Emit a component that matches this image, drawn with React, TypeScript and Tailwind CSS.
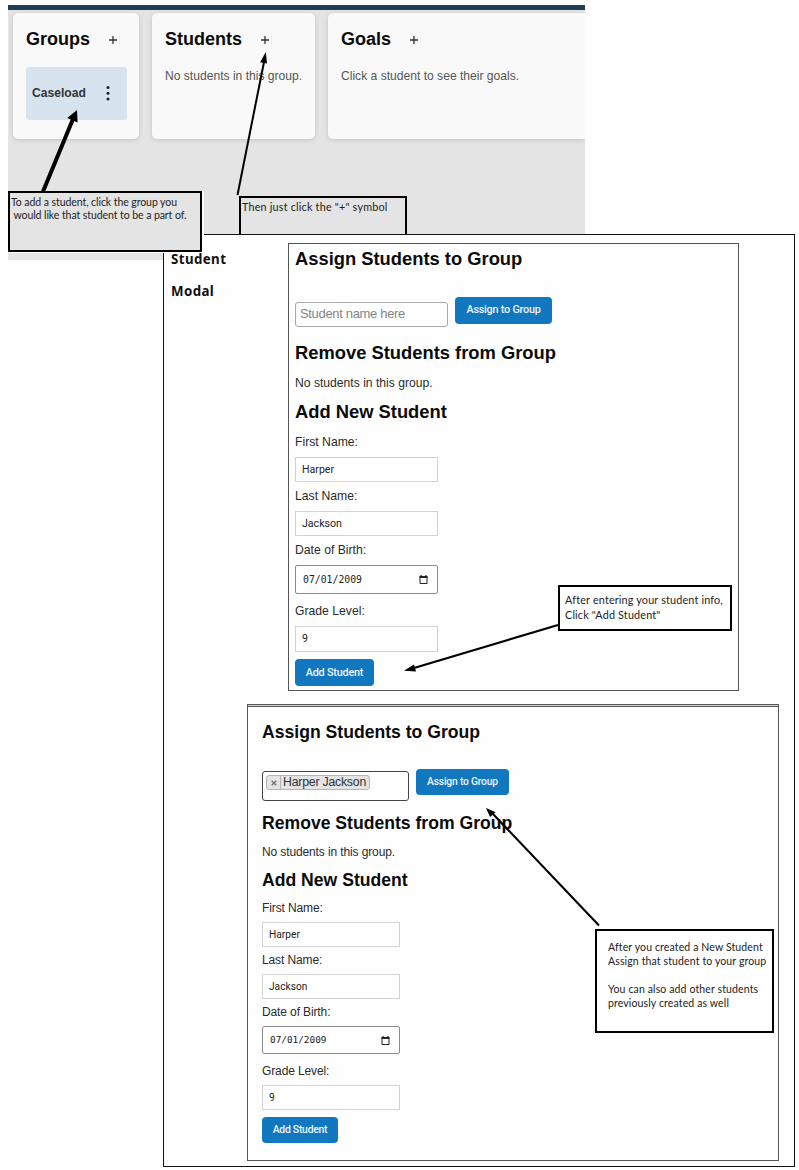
import React from "react";

const sizes = {
  large: {
    heading: "text-[18.35px] font-bold text-[#0b0b0b] whitespace-nowrap leading-[22px]",
    first: "pt-[4px] h-[29px]",
    row: "mt-[24px] flex h-[30px] items-start gap-[7px]",
    remove: "mt-[15px]",
    note: "mt-[10px] text-[12.15px] leading-[18px] text-[#2b2b2b]",
    add: "mt-[9px]",
    assign: "h-[27px] w-[97px] text-[10.8px] tracking-[-0.22px]",
    submit: "mt-[7px] h-[27px] w-[79px] pt-[1px] text-[10.8px] tracking-[-0.2px]",
    label: "text-[12.2px] leading-[18px] text-[#2b2b2b]",
    firstLabel: "mt-[10px]",
    nextLabel: "mt-[5px]",
    gradeLabel: "mt-[8px]",
    input: "mt-[6px] h-[25px] w-[143px] text-[10.6px] pl-[6px]",
    date: "mt-[6px] h-[29px] w-[143px] pl-[7px] pr-[9px] pt-[1px] text-[9.8px]",
    grade: "mt-[6px] h-[26px] w-[143px] text-[10.6px] pl-[6px]",
  },
  small: {
    heading: "text-[17.6px] font-bold text-[#0b0b0b] whitespace-nowrap leading-[22px]",
    first: "pt-[14px] h-[36px]",
    row: "mt-[26px] flex h-[32px] items-start gap-[7px]",
    remove: "mt-[11px]",
    note: "mt-[9px] text-[12px] tracking-[-0.12px] leading-[18px] text-[#2b2b2b]",
    add: "mt-[8px]",
    assign: "h-[26px] w-[93px] text-[10.3px] tracking-[-0.2px]",
    submit: "mt-[7px] h-[26px] w-[76px] text-[10.4px] tracking-[-0.25px]",
    label: "text-[12px] tracking-[-0.12px] leading-[18px] text-[#2b2b2b]",
    firstLabel: "mt-[8px]",
    nextLabel: "mt-[4px]",
    gradeLabel: "mt-[8px]",
    input: "mt-[5px] h-[25px] w-[138px] text-[10.2px] pl-[6px]",
    date: "mt-[5px] h-[28px] w-[138px] pl-[7px] pr-[9px] pt-[1px] text-[9.4px]",
    grade: "mt-[5px] h-[25px] w-[138px] text-[10.2px] pl-[6px]",
  },
};

const inputBase = "flex items-center border border-[#d2d2d2] bg-white font-[Roboto,sans-serif] text-[#222]";
const buttonBase = "flex items-center justify-center rounded-[4px] bg-[#1177bf] font-[Roboto,sans-serif] font-medium text-[#eef6fc] whitespace-nowrap";

function CalendarIcon() {
  return (
    <svg width="9" height="10" viewBox="0 0 9 10" fill="none">
      <path d="M1 1.5h7v7H1z" stroke="#222" />
      <path d="M.5 1h8v2h-8zM1.5 0h1.2v1.5H1.5zM6.3 0h1.2v1.5H6.3z" fill="#222" />
    </svg>
  );
}

function StudentForm({ size, picker }: { size: "large" | "small"; picker: React.ReactNode }) {
  const s = sizes[size];
  return (
    <div>
      <h2 className={`${s.heading} ${s.first}`}>Assign Students to Group</h2>
      <div className={s.row}>
        {picker}
        <button className={`${buttonBase} ${s.assign}`}>Assign to Group</button>
      </div>
      <h2 className={`${s.heading} ${s.remove}`}>Remove Students from Group</h2>
      <p className={s.note}>No students in this group.</p>
      <h2 className={`${s.heading} ${s.add}`}>Add New Student</h2>
      <p className={`${s.label} ${s.firstLabel}`}>First Name:</p>
      <div className={`${inputBase} ${s.input}`}>Harper</div>
      <p className={`${s.label} ${s.nextLabel}`}>Last Name:</p>
      <div className={`${inputBase} ${s.input}`}>Jackson</div>
      <p className={`${s.label} ${s.nextLabel}`}>Date of Birth:</p>
      <div
        className={`flex items-center justify-between rounded-[2px] border border-[#8a8a8a] bg-white font-['DejaVu_Sans_Mono',monospace] text-[#222] ${s.date}`}
      >
        <span>07/01/2009</span>
        <CalendarIcon />
      </div>
      <p className={`${s.label} ${s.gradeLabel}`}>Grade Level:</p>
      <div className={`${inputBase} ${s.grade}`}>9</div>
      <button className={`${buttonBase} ${s.submit}`}>Add Student</button>
    </div>
  );
}

function CardTitle({ children }: { children: string }) {
  return (
    <div className="flex h-[24px] items-center gap-[19px]">
      <h2 className="text-[18px] font-bold leading-[24px] text-[#0b0b0b]">{children}</h2>
      <svg className="mt-[2px]" width="8" height="8" viewBox="0 0 8 8">
        <path d="M4 0v8M0 4h8" stroke="#333" strokeWidth="1.3" />
      </svg>
    </div>
  );
}

const card = "h-[126px] bg-[#f9f9f9] pt-[14px] pl-[13px] shadow-[0_1px_4px_rgba(60,70,90,0.2)]";
const callout = "absolute border-[2px] border-black font-[Lato,sans-serif] text-[#222] whitespace-pre";

export default function App() {
  return (
    <div className="relative h-[1170px] w-[799px] overflow-hidden bg-white pt-[5px] font-['Liberation_Sans',Arial,sans-serif]">
      <section className="ml-[8px] h-[255px] w-[577px] overflow-hidden border-t-[5px] border-[#1c3f55] bg-[#e4e4e4]">
        <div className="flex pt-[3px] pl-[5px]">
          <div className={`${card} w-[126px] shrink-0 rounded-[5px]`}>
            <CardTitle>Groups</CardTitle>
            <div className="mt-[16px] flex h-[53px] w-[101px] items-center justify-between rounded-[3px] bg-[#d7e4ef] pr-[17px] pl-[6px]">
              <span className="text-[12.1px] font-bold text-[#333]">Caseload</span>
              <svg width="4" height="16" viewBox="0 0 4 16" fill="#222">
                <circle cx="2" cy="1.6" r="1.5" />
                <circle cx="2" cy="7.2" r="1.5" />
                <circle cx="2" cy="13" r="1.5" />
              </svg>
            </div>
          </div>
          <div className={`${card} ml-[13px] w-[163px] shrink-0 rounded-[5px]`}>
            <CardTitle>Students</CardTitle>
            <p className="mt-[16px] text-[12.1px] leading-[18px] whitespace-nowrap text-[#555]">No students in this group.</p>
          </div>
          <div className={`${card} ml-[13px] w-[257px] shrink-0 rounded-l-[5px]`}>
            <CardTitle>Goals</CardTitle>
            <p className="mt-[16px] text-[12.1px] leading-[18px] whitespace-nowrap text-[#555]">Click a student to see their goals.</p>
          </div>
        </div>
      </section>

      <div className={`${callout} left-[239px] top-[196px] h-[60px] w-[168px] bg-[#e4e4e4] pt-[2px] pl-[1px] text-[10.8px] leading-[14px] tracking-[0.2px]`}>
        {'Then just click the "+" symbol'}
      </div>

      <main className="relative -mt-[26px] ml-[163px] h-[933px] w-[632px] border border-[#111] bg-[#fefefe]">
        <div className="flex pt-[8px] pl-[7px]">
          <div className="w-[117px] shrink-0 font-['Noto_Sans',sans-serif] text-[13.3px] leading-[32px] font-bold tracking-[0.4px] text-[#111]">
            <p>Student</p>
            <p>Modal</p>
          </div>
          <div className="h-[448px] w-[451px] border border-[#555] pl-[6px]">
            <StudentForm
              size="large"
              picker={
                <div className="mt-[5px] flex h-[25px] w-[153px] items-center rounded-[3px] border border-[#aaa] bg-white pb-[2px] pl-[4px] text-[13px] tracking-[-0.33px] whitespace-nowrap text-[#858585]">
                  Student name here
                </div>
              }
            />
          </div>
        </div>
        <div className="mt-[13px] ml-[83px] h-[457px] w-[532px] border border-[#555]">
          <div className="h-[2px] border-b border-[#555] bg-[#cfdccf]" />
          <div className="pl-[14px]">
            <StudentForm
              size="small"
              picker={
                <div className="mt-[2px] h-[30px] w-[147px] rounded-[3px] border border-[#444] bg-white pt-[3px] pl-[3px]">
                  <div className="flex h-[15px] w-[104px] items-center rounded-[3px] border border-[#b5b5b5] bg-[#e4e4e4]">
                    <span className="flex h-full w-[14px] items-center justify-center border-r border-[#b5b5b5]">
                      <svg width="6" height="6" viewBox="0 0 6 6">
                        <path d="M.7.7l4.6 4.6M5.3.7L.7 5.3" stroke="#777" strokeWidth="1.5" />
                      </svg>
                    </span>
                    <span className="pl-[2px] text-[12.3px] tracking-[-0.22px] leading-[13px] whitespace-nowrap text-[#333]">Harper Jackson</span>
                  </div>
                </div>
              }
            />
          </div>
        </div>
      </main>

      <div className="absolute left-[8px] top-[191px] h-[62px] w-[196px] bg-white" />
      <div className={`${callout} left-[8px] top-[191px] h-[61px] w-[194px] bg-[#e4e4e4] pt-[3px] pl-[1px] text-[10.5px] leading-[13px] tracking-[-0.07px]`}>
        {"To add a student, click the group you\n would like that student to be a part of."}
      </div>
      <div className={`${callout} left-[558px] top-[585px] h-[46px] w-[174px] bg-white pt-[6px] pl-[5px] text-[10.8px] leading-[14.5px] tracking-[0.17px]`}>
        {'After entering your student info,\nClick "Add Student"'}
      </div>
      <div className={`${callout} left-[595px] top-[929px] h-[104px] w-[179px] bg-white pt-[9px] pl-[11px] text-[10.5px] leading-[14px] tracking-[0.13px]`}>
        {"After you created a New Student\nAssign that student to your group\n\nYou can also add other students\npreviously created as well"}
      </div>

      <svg className="pointer-events-none absolute left-0 top-0" width="799" height="1170" viewBox="0 0 799 1170">
        <g stroke="#000" fill="none">
          <path d="M43 191.5L73 119" strokeWidth="4" />
          <path d="M237.5 195L264 62" strokeWidth="2" />
          <path d="M558 625L414 668" strokeWidth="2.1" />
          <path d="M599 925.5L493 814" strokeWidth="2.1" />
        </g>
        <g fill="#000">
          <path d="M77 110L67.3 118L77.6 122.5z" />
          <path d="M265.8 52L260.2 62.2L267 63.5z" />
          <path d="M404 670.8L414 664.5L416 671.5z" />
          <path d="M486 808L495.7 812.2L490 817z" />
        </g>
      </svg>
    </div>
  );
}
